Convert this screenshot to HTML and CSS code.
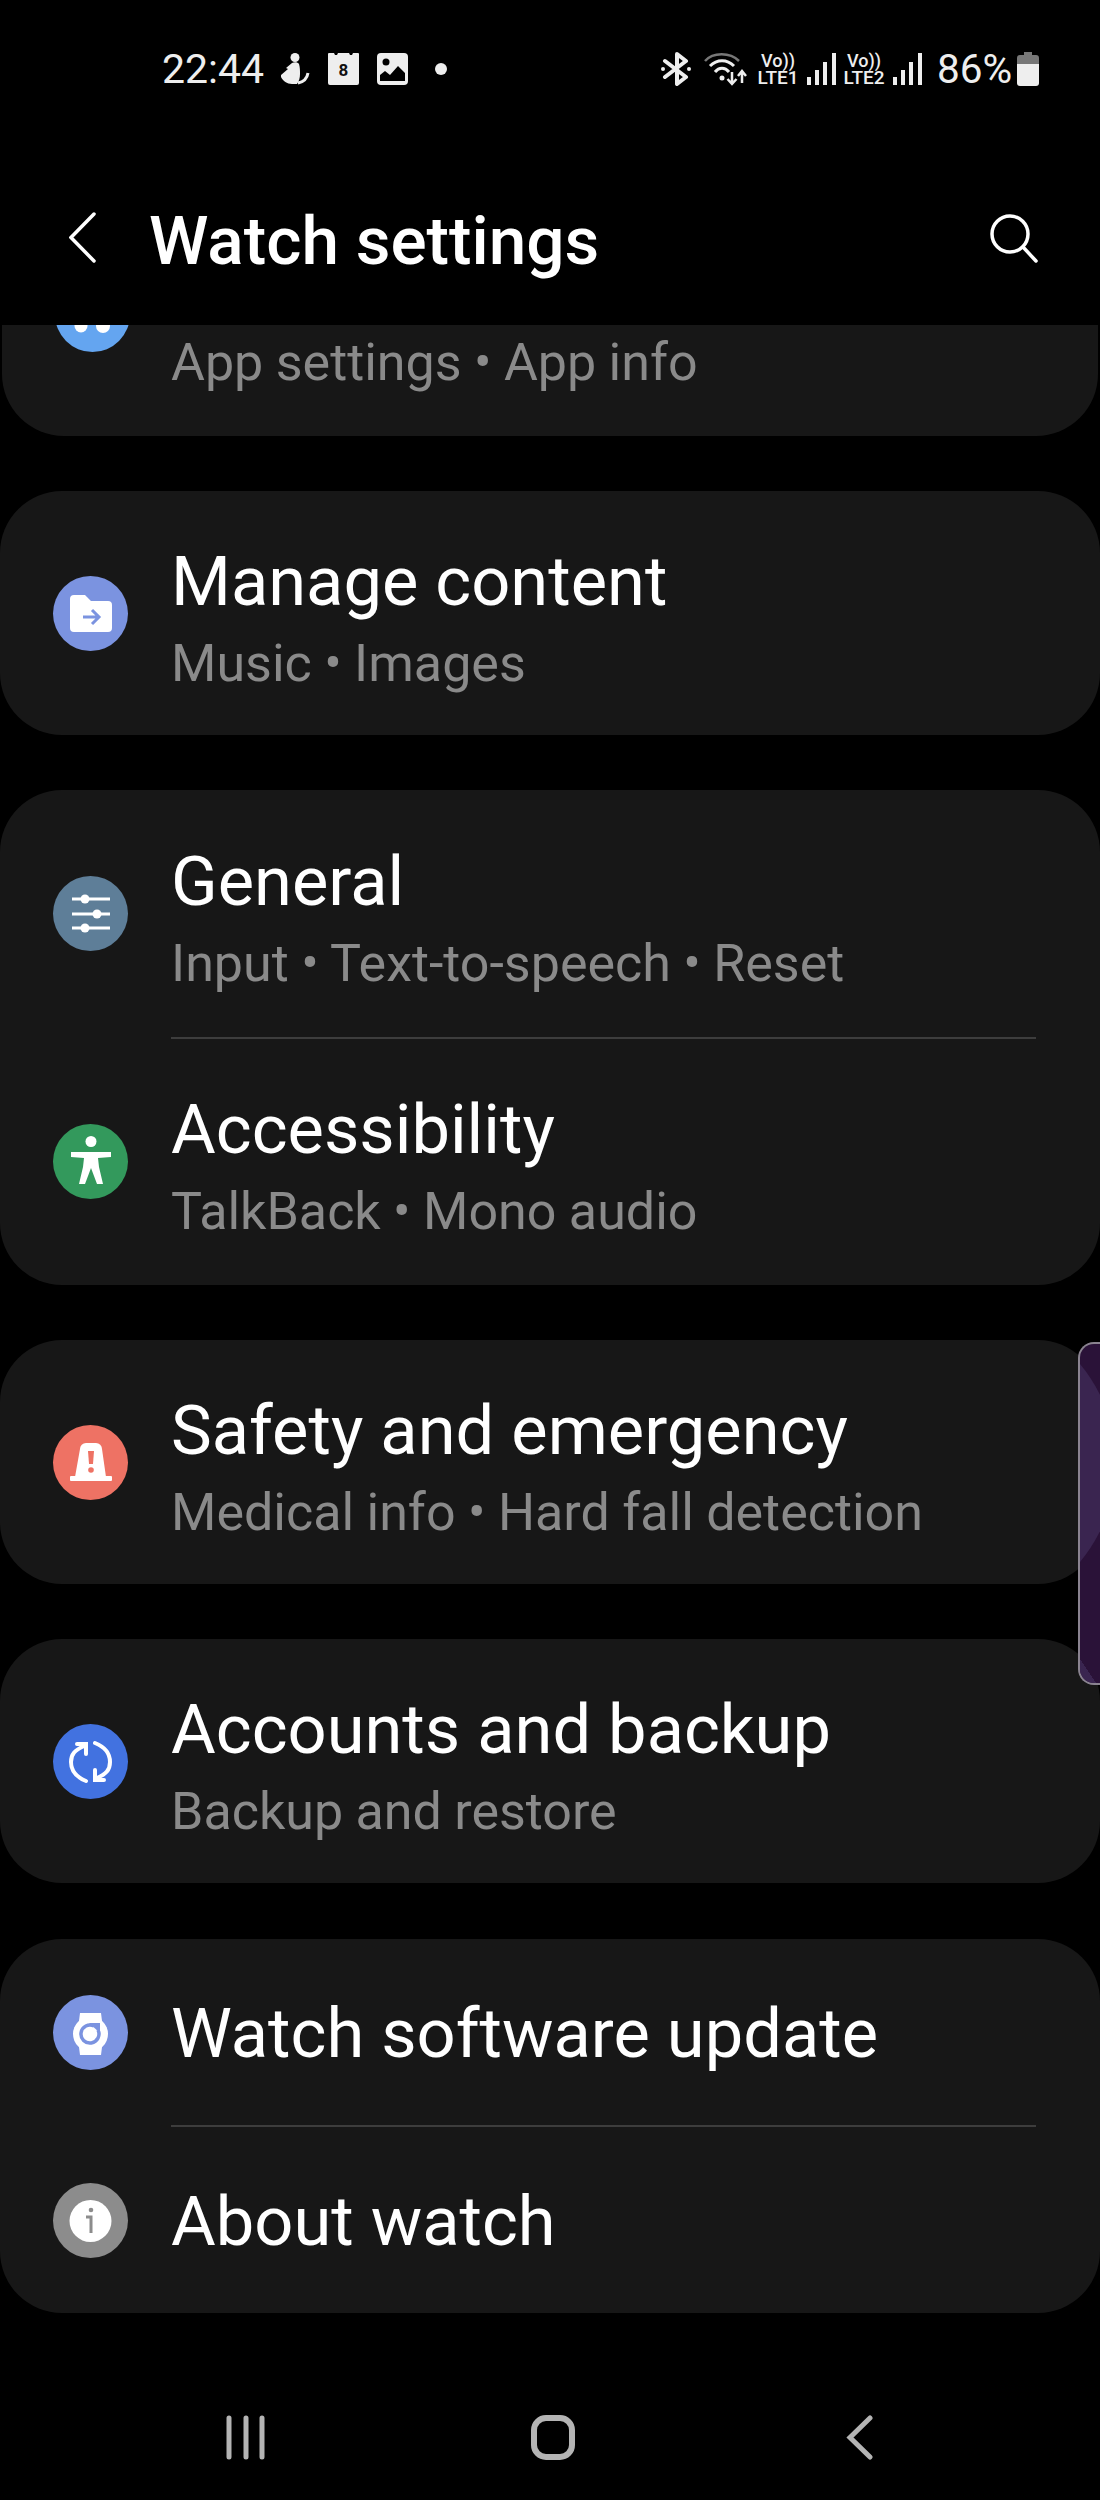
FILE: index.html
```html
<!DOCTYPE html>
<html lang="en">
<head>
    <meta charset="UTF-8">
    <meta name="viewport" content="width=device-width, initial-scale=1.0">
    <title>Watch settings</title>
    <link rel="stylesheet" href="styles.css">
</head>
<body>
    <div id="phone">
        <!-- status bar -->
        <div class="status">
            <div class="status-left">
                <span class="time">22:44</span>
                <svg class="st-icon" width="30" height="32" viewBox="0 0 30 32">
                    <circle cx="15" cy="4.500" r="4.500" fill="#eee"/>
                    <path d="M12 10c2-1 6-1 7 1 1 3 1 7 1 10 0 4-1 7-3 10h-5c-5 0-9-3-11-7v-2l7-6-2-1z" fill="#eee"/>
                    <path d="M18 30c5-1 9-4 10-10" fill="none" stroke="#eee" stroke-width="3"/>
                </svg>
                <svg class="st-icon" width="31" height="32" viewBox="0 0 31 32">
                    <path d="M1 0h5l1 2 2 0 1-2h11l1 2h2l1-2h5a1 1 0 0 1 1 1v29a2 2 0 0 1-2 2H2a2 2 0 0 1-2-2V1a1 1 0 0 1 1-1z" fill="#eee"/>
                    <text x="15.5" y="23" class="cal-num">8</text>
                </svg>
                <svg class="st-icon" width="31" height="32" viewBox="0 0 31 32">
                    <rect width="31" height="32" rx="4" fill="#eee"/>
                    <circle cx="9" cy="9" r="3.500" fill="#000"/>
                    <path d="M3 22l5-4 5 4 8-9 7 7v8H3z" fill="#000"/>
                </svg>
                <span class="st-dot"></span>
            </div>
            <div class="status-right">
                <svg width="30" height="34" viewBox="0 0 30 34">
                    <path d="M4 9l21 16-9 7V2l9 7L4 25" fill="none" stroke="#eee" stroke-width="4" stroke-linejoin="round" stroke-linecap="round"/>
                    <circle cx="2" cy="17" r="2" fill="#eee"/>
                    <circle cx="28" cy="17" r="2" fill="#eee"/>
                </svg>
                <svg class="wifi" width="43" height="34" viewBox="0 0 43 34">
                    <path d="M1 9C9 0 26 0 35 9" fill="none" stroke="#777" stroke-width="2.500"/>
                    <path d="M6 14C13 7 23 7 30 14" fill="none" stroke="#eee" stroke-width="3"/>
                    <path d="M11 20C15 15 21 15 25 20" fill="none" stroke="#eee" stroke-width="3"/>
                    <circle cx="18" cy="26" r="2.500" fill="#eee"/>
                    <path d="M28 20v12M23.500 27l4.500 5 4.500-5M38 31V19M34 24l4-5 4 5" fill="none" stroke="#eee" stroke-width="2.500"/>
                </svg>
                <div class="volte"><span class="vo">Vo))</span><span class="lte">LTE1</span></div>
                <svg class="bars" width="29" height="32" viewBox="0 0 29 32">
                    <rect x="0" y="24" width="4" height="8" fill="#eee"/>
                    <rect x="8" y="17" width="4" height="15" fill="#eee"/>
                    <rect x="16" y="9" width="4" height="23" fill="#eee"/>
                    <rect x="25" y="0" width="4" height="32" fill="#eee"/>
                </svg>
                <div class="volte volte2"><span class="vo">Vo))</span><span class="lte">LTE2</span></div>
                <svg class="bars" width="29" height="32" viewBox="0 0 29 32">
                    <rect x="0" y="24" width="4" height="8" fill="#eee"/>
                    <rect x="8" y="17" width="4" height="15" fill="#eee"/>
                    <rect x="16" y="9" width="4" height="23" fill="#eee"/>
                    <rect x="25" y="0" width="4" height="32" fill="#eee"/>
                </svg>
                <span class="pct">86%</span>
                <svg class="batt" width="22" height="34" viewBox="0 0 22 34">
                    <path d="M7 0h8v3h4a3 3 0 0 1 3 3v7H0V6a3 3 0 0 1 3-3h4z" fill="#777"/>
                    <path d="M0 12h22v19a3 3 0 0 1-3 3H3a3 3 0 0 1-3-3z" fill="#eee"/>
                </svg>
            </div>
        </div>

        <!-- title bar -->
        <div class="header">
            <svg class="back" width="27" height="51" viewBox="0 0 27 51">
                <path d="M25 2L2 25.500 25 49" fill="none" stroke="#fff" stroke-width="3.500" stroke-linecap="round"/>
            </svg>
            <h1>Watch settings</h1>
            <svg class="search" width="48" height="50" viewBox="0 0 48 50">
                <circle cx="20" cy="21" r="18" fill="none" stroke="#fff" stroke-width="3.500"/>
                <path d="M33 34l13 14" fill="none" stroke="#fff" stroke-width="3.500" stroke-linecap="round"/>
            </svg>
        </div>

        <!-- settings list -->
        <div class="list">
            <div class="card first">
                <div class="row">
                    <span class="badge sky">
                        <svg viewBox="0 0 75 75"><circle cx="26" cy="49" r="6.500" fill="#fff"/><circle cx="48" cy="49" r="7" fill="#fff"/></svg>
                    </span>
                    <div class="text">
                        <div class="sub">App settings • App info</div>
                    </div>
                </div>
            </div>

            <div class="card">
                <div class="row">
                    <span class="badge periwinkle">
                        <svg viewBox="0 0 75 75">
                            <path d="M17 23a4 4 0 0 1 4-4h11l6 6h17a4 4 0 0 1 4 4v23a4 4 0 0 1-4 4H21a4 4 0 0 1-4-4z" fill="#fff"/>
                            <path d="M30 41h16M39 34l7 7-7 7" fill="none" stroke="#7b93e0" stroke-width="3"/>
                        </svg>
                    </span>
                    <div class="text">
                        <div class="name">Manage content</div>
                        <div class="sub">Music • Images</div>
                    </div>
                </div>
            </div>

            <div class="card double">
                <div class="row">
                    <span class="badge slate">
                        <svg viewBox="0 0 75 75">
                            <path d="M19 23h38M19 38h38M19 52h38" fill="none" stroke="#fff" stroke-width="3"/>
                            <circle cx="32" cy="23" r="4.500" fill="#fff"/>
                            <circle cx="44" cy="38" r="4.500" fill="#fff"/>
                            <circle cx="32" cy="52" r="4.500" fill="#fff"/>
                        </svg>
                    </span>
                    <div class="text">
                        <div class="name">General</div>
                        <div class="sub">Input • Text-to-speech • Reset</div>
                    </div>
                </div>
                <div class="divider"></div>
                <div class="row">
                    <span class="badge green">
                        <svg viewBox="0 0 75 75">
                            <circle cx="38" cy="17.500" r="5.500" fill="#fff"/>
                            <path d="M18 28h40v5l-13 1 1 9 4 17h-6l-6-16-6 16h-6l4-17 1-9-13-1z" fill="#fff"/>
                        </svg>
                    </span>
                    <div class="text">
                        <div class="name">Accessibility</div>
                        <div class="sub">TalkBack • Mono audio</div>
                    </div>
                </div>
            </div>

            <div class="card">
                <div class="row">
                    <span class="badge coral">
                        <svg viewBox="0 0 75 75">
                            <path d="M27 24a6 6 0 0 1 6-6h10a6 6 0 0 1 6 6l4 28h-31z" fill="#fff"/>
                            <rect x="17" y="51" width="42" height="5" rx="1" fill="#fff"/>
                            <path d="M35 26h6l-1 13h-4z" fill="#ee7264"/>
                            <circle cx="38" cy="45" r="2.800" fill="#ee7264"/>
                        </svg>
                    </span>
                    <div class="text">
                        <div class="name">Safety and emergency</div>
                        <div class="sub">Medical info • Hard fall detection</div>
                    </div>
                </div>
            </div>

            <div class="card">
                <div class="row">
                    <span class="badge blue">
                        <svg viewBox="0 0 75 75">
                            <path d="M33 57C23 53 18 46 18 38S22 26 31 22M24 20h9v10M42 19C52 23 57 30 57 38S53 50 44 54M51 56h-9V46" fill="none" stroke="#fff" stroke-width="4" stroke-linecap="round"/>
                        </svg>
                    </span>
                    <div class="text">
                        <div class="name">Accounts and backup</div>
                        <div class="sub">Backup and restore</div>
                    </div>
                </div>
            </div>

            <div class="card last">
                <div class="row single">
                    <span class="badge periwinkle">
                        <svg viewBox="0 0 75 75">
                            <path d="M27 18h21l1 8H26zM26 52h23l-1 8H27z" fill="#fff"/>
                            <circle cx="37.500" cy="39" r="17.500" fill="#fff"/>
                            <path d="M45 35a9 9 0 1 1-4-4" fill="none" stroke="#7b93e0" stroke-width="3.500"/>
                            <path d="M36 28h11v10z" fill="#7b93e0"/>
                        </svg>
                    </span>
                    <div class="text">
                        <div class="name">Watch software update</div>
                    </div>
                </div>
                <div class="divider"></div>
                <div class="row single">
                    <span class="badge grey">
                        <svg viewBox="0 0 75 75">
                            <circle cx="37.500" cy="38" r="21" fill="#fff"/>
                            <circle cx="38" cy="27" r="2.300" fill="#8c8c8c"/>
                            <path d="M33 34h5v16" fill="none" stroke="#8c8c8c" stroke-width="3"/>
                        </svg>
                    </span>
                    <div class="text">
                        <div class="name">About watch</div>
                    </div>
                </div>
            </div>
        </div>

        <!-- nav bar -->
        <div class="nav">
            <svg width="40" height="45" viewBox="0 0 40 45">
                <path d="M3 3v39M20 3v39M36 3v39" fill="none" stroke="#b4b4b4" stroke-width="5" stroke-linecap="round"/>
            </svg>
            <svg width="44" height="45" viewBox="0 0 44 45">
                <rect x="3" y="3" width="38" height="39" rx="12" fill="none" stroke="#b4b4b4" stroke-width="6"/>
            </svg>
            <svg width="28" height="45" viewBox="0 0 28 45">
                <path d="M24 3L4 22.500 24 42" fill="none" stroke="#b4b4b4" stroke-width="5" stroke-linecap="round"/>
            </svg>
        </div>

        <div class="edge-handle"></div>
    </div>
</body>
</html>
```
FILE: styles.css
```css
* { margin: 0; padding: 0; box-sizing: border-box; }

body {
    background-color: #000;
    font-family: Roboto, "Liberation Sans", sans-serif;
    color: #fff;
}

#phone {
    position: relative;
    width: 1100px;
    height: 2500px;
    display: flex;
    flex-direction: column;
    overflow: hidden;
}

/* status bar */
.status {
    height: 138px;
    flex-shrink: 0;
    display: flex;
    justify-content: space-between;
    align-items: center;
    padding: 0 61px 0 162px;
    color: #eee;
}

.status-left, .status-right {
    display: flex;
    align-items: center;
}

.time { font-size: 41px; width: 100px; }
.st-icon { margin-left: 18px; }

.st-dot {
    width: 12px;
    height: 12px;
    border-radius: 50%;
    background-color: #eee;
    margin-left: 27px;
}

.cal-num {
    font-size: 17px;
    font-weight: 700;
    text-anchor: middle;
    fill: #111;
}

.wifi { margin-left: 13px; }

.volte {
    width: 40px;
    margin-left: 11px;
    display: flex;
    flex-direction: column;
    align-items: center;
    font-weight: 500;
}

.volte2 { margin-left: 8px; }
.vo { font-size: 18px; line-height: 17px; }
.lte { font-size: 19px; line-height: 18px; }
.bars { margin-left: 9px; }
.pct { font-size: 40.5px; margin-left: 15px; width: 73px; }
.batt { margin-left: 7px; }

/* title bar */
.header {
    height: 187px;
    flex-shrink: 0;
    display: flex;
    align-items: center;
    padding: 12px 62px 0 69px;
}

.header h1 {
    flex: 1;
    font-size: 67.5px;
    font-weight: 500;
    margin: 6px 0 0 53px;
}

/* list */
.list {
    flex: 1;
    overflow: hidden;
    display: flex;
    flex-direction: column;
    gap: 55px;
}

.card {
    flex-shrink: 0;
    background-color: #171717;
    border-radius: 62px;
}

.card.first {
    margin: -133px 2px 0;
}

.card.last { margin-top: 1px; }

.row {
    height: 244px;
    display: flex;
    align-items: center;
    padding-left: 53px;
}

.double .row { height: 246.5px; }
.row.single { height: 186px; }

.badge {
    width: 75px;
    height: 75px;
    flex-shrink: 0;
    border-radius: 50%;
    margin-right: 43px;
}

.first .badge { margin-right: 41px; }

.badge svg { display: block; }

.sky { background-color: #64a5f0; }
.periwinkle { background-color: #7b93e0; }
.slate { background-color: #5e7e98; }
.green { background-color: #33995c; }
.coral { background-color: #ee7264; }
.blue { background-color: #4272e0; }
.grey { background-color: #8c8c8c; }

.text { padding-top: 15px; }
.single .text { padding-top: 3px; }
.first .text { padding-top: 92px; }

.name {
    font-size: 68.6px;
    line-height: 80px;
    color: #fff;
}

.sub {
    font-size: 52px;
    line-height: 72px;
    margin-top: 6px;
    word-spacing: -0.5px;
    color: #8a8a8a;
}

.divider {
    height: 2px;
    background-color: #3d3d3d;
    margin: 0 64px 0 171px;
}

/* nav bar */
.nav {
    height: 160px;
    flex-shrink: 0;
    display: grid;
    grid-template-columns: repeat(3, 307px);
    justify-content: center;
    justify-items: center;
    align-items: center;
    padding: 34px 0 0 5px;
}

/* edge panel handle, sits over the list */
.edge-handle {
    position: absolute;
    top: 1342px;
    right: 0;
    width: 22px;
    height: 343px;
    background-color: #2a1238;
    border: 2px solid #8a8390;
    border-right: 0;
    border-radius: 16px 0 0 16px;
    overflow: hidden;
}

.edge-handle::before {
    content: "";
    position: absolute;
    top: -35px;
    left: -272px;
    width: 308px;
    height: 308px;
    border-radius: 50%;
    background-color: #3a2550;
}

.edge-handle::after {
    content: "";
    position: absolute;
    bottom: 0;
    left: 0;
    width: 16px;
    height: 24px;
    background-image: linear-gradient(to top right, #3a2550 50%, transparent 50%);
}
```
